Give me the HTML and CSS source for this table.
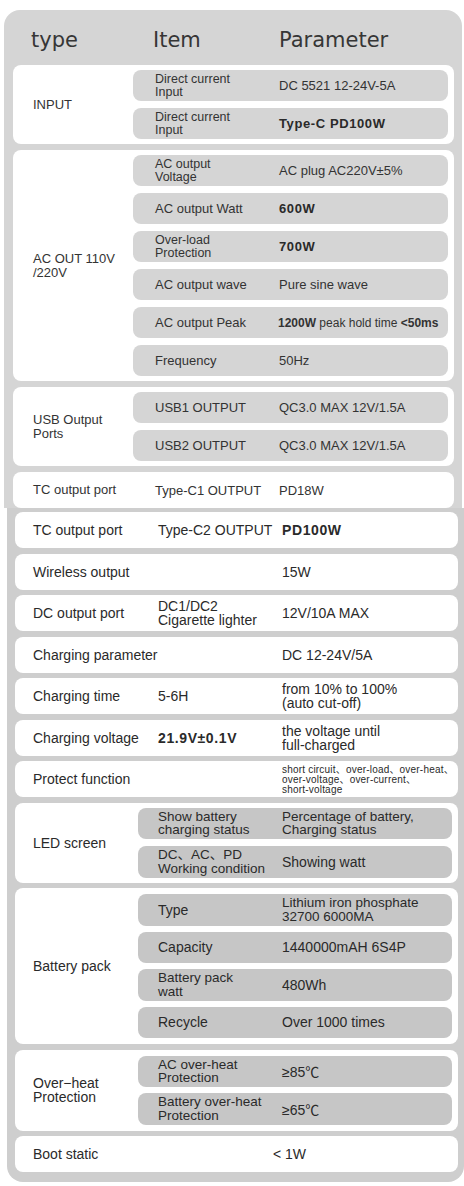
FILE: index.html
```html
<!DOCTYPE html>
<html lang="en">
<head>
<meta charset="utf-8">
<title>Parameters</title>
<link rel="stylesheet" href="styles.css">
</head>
<body>
<div class="sheet sheet-top">
  <div class="head">
    <div class="h-type">type</div>
    <div class="h-item">Item</div>
    <div class="h-param">Parameter</div>
  </div>

  <div class="card">
    <div class="type">INPUT</div>
    <div class="rows">
      <div class="row pill"><div class="item two">Direct current<br>Input</div><div class="param">DC 5521 12-24V-5A</div></div>
      <div class="row pill"><div class="item two">Direct current<br>Input</div><div class="param strong">Type-C PD100W</div></div>
    </div>
  </div>

  <div class="card">
    <div class="type two-lbl">AC OUT 110V<br>/220V</div>
    <div class="rows">
      <div class="row pill"><div class="item two">AC output<br>Voltage</div><div class="param">AC plug AC220V±5%</div></div>
      <div class="row pill"><div class="item">AC output Watt</div><div class="param strong">600W</div></div>
      <div class="row pill"><div class="item two">Over-load<br>Protection</div><div class="param strong">700W</div></div>
      <div class="row pill"><div class="item">AC output wave</div><div class="param">Pure sine wave</div></div>
      <div class="row pill"><div class="item">AC output Peak</div><div class="param small"><b>1200W</b> peak hold time <b>&lt;50ms</b></div></div>
      <div class="row pill"><div class="item">Frequency</div><div class="param">50Hz</div></div>
    </div>
  </div>

  <div class="card">
    <div class="type two-lbl">USB Output<br>Ports</div>
    <div class="rows">
      <div class="row pill"><div class="item">USB1 OUTPUT</div><div class="param">QC3.0 MAX 12V/1.5A</div></div>
      <div class="row pill"><div class="item">USB2 OUTPUT</div><div class="param">QC3.0 MAX 12V/1.5A</div></div>
    </div>
  </div>

  <div class="card single">
    <div class="type">TC output port</div>
    <div class="row"><div class="item">Type-C1 OUTPUT</div><div class="param">PD18W</div></div>
  </div>
</div>

<div class="sheet sheet-bottom">
  <div class="card single">
    <div class="type">TC output port</div>
    <div class="row"><div class="item">Type-C2 OUTPUT</div><div class="param strong">PD100W</div></div>
  </div>

  <div class="card single">
    <div class="type">Wireless output</div>
    <div class="row"><div class="item"></div><div class="param">15W</div></div>
  </div>

  <div class="card single">
    <div class="type">DC output port</div>
    <div class="row"><div class="item two">DC1/DC2<br>Cigarette lighter</div><div class="param">12V/10A MAX</div></div>
  </div>

  <div class="card single">
    <div class="type">Charging parameter</div>
    <div class="row"><div class="item"></div><div class="param">DC 12-24V/5A</div></div>
  </div>

  <div class="card single">
    <div class="type">Charging time</div>
    <div class="row"><div class="item">5-6H</div><div class="param two">from 10% to 100%<br>(auto cut-off)</div></div>
  </div>

  <div class="card single">
    <div class="type">Charging voltage</div>
    <div class="row"><div class="item strong">21.9V±0.1V</div><div class="param two">the voltage until<br>full-charged</div></div>
  </div>

  <div class="card single">
    <div class="type">Protect function</div>
    <div class="row"><div class="item"></div><div class="param tiny">short circuit、over-load、over-heat、<br>over-voltage、over-current、<br>short-voltage</div></div>
  </div>

  <div class="card">
    <div class="type">LED screen</div>
    <div class="rows">
      <div class="row pill"><div class="item two">Show battery<br>charging status</div><div class="param two">Percentage of battery,<br>Charging status</div></div>
      <div class="row pill"><div class="item two">DC、AC、PD<br>Working condition</div><div class="param">Showing watt</div></div>
    </div>
  </div>

  <div class="card battery">
    <div class="type">Battery pack</div>
    <div class="rows">
      <div class="row pill"><div class="item">Type</div><div class="param two">Lithium iron phosphate<br>32700 6000MA</div></div>
      <div class="row pill"><div class="item">Capacity</div><div class="param">1440000mAH 6S4P</div></div>
      <div class="row pill"><div class="item two">Battery pack<br>watt</div><div class="param">480Wh</div></div>
      <div class="row pill"><div class="item">Recycle</div><div class="param">Over 1000 times</div></div>
    </div>
  </div>

  <div class="card heat">
    <div class="type two-lbl">Over−heat<br>Protection</div>
    <div class="rows">
      <div class="row pill"><div class="item two">AC over-heat<br>Protection</div><div class="param">≥85℃</div></div>
      <div class="row pill"><div class="item two">Battery over-heat<br>Protection</div><div class="param">≥65℃</div></div>
    </div>
  </div>

  <div class="card single">
    <div class="type">Boot static</div>
    <div class="row"><div class="item"></div><div class="param shift">&lt; 1W</div></div>
  </div>
</div>
</body>
</html>
```

FILE: styles.css
```css
* { box-sizing: border-box; }

html, body {
  margin: 0;
  padding: 0;
  background: #ffffff;
}

body {
  width: 464px;
  font-family: "Liberation Sans", Arial, "Noto Sans CJK SC", sans-serif;
  color: #333333;
  padding-top: 10px;
  padding-bottom: 6px;
}

.sheet {
  display: flex;
  flex-direction: column;
}

.sheet-top {
  margin-left: 4px;
  width: 458px;
  background: #d5d5d5;
  border-radius: 16px 16px 0 0;
  padding: 0 8px 0 9px;
  gap: 6px;
  --tc: 120px;
  --rp: 22px;
  --tp: 20px;
  font-size: 13px;
}

.sheet-bottom {
  margin-left: 7px;
  width: 457px;
  background: #cecece;
  border-radius: 0 0 16px 16px;
  padding: 4px 6px 10px 8px;
  gap: 5.5px;
  --tc: 123px;
  --rp: 20px;
  --tp: 18px;
  font-size: 14px;
  color: #2a2a2a;
}

.head {
  display: grid;
  grid-template-columns: 122px 126px 1fr;
  height: 55px;
  margin-bottom: -6px;
  padding: 6px 0 0 18px;
  font-family: "DejaVu Sans", "Liberation Sans", sans-serif;
  font-size: 21px;
  line-height: 49px;
  color: #363636;
}

.card {
  display: grid;
  grid-template-columns: var(--tc) 1fr;
  align-items: center;
  background: #ffffff;
  border-radius: 8px;
  padding: 5px 6px 5px 0;
}

.card.single {
  padding: 0 6px 0 0;
  min-height: 36px;
}

.card.battery { padding: 6px 6px 6px 0; }
.card.heat { padding: 6px 6px 6px 0; }

.type {
  padding-left: var(--tp);
  white-space: nowrap;
  line-height: 14px;
}

.rows {
  display: flex;
  flex-direction: column;
  gap: 7px;
}

.battery .rows { gap: 6px; }
.heat .rows { gap: 6px; }

.row {
  display: grid;
  grid-template-columns: 124px 1fr;
  align-items: center;
  padding-left: var(--rp);
  white-space: nowrap;
}

.pill {
  height: 31px;
  background: #d5d5d5;
  border-radius: 8px;
}

.sheet-bottom .pill {
  height: 31.5px;
  background: #c6c6c6;
}

.two { line-height: 12.5px; }
.sheet-top .item.two { font-size: 12.5px; }
.sheet-bottom .two { line-height: 14px; }
.sheet-bottom .pill .two {
  font-size: 13.5px;
  line-height: 13.5px;
}

.strong {
  font-weight: bold;
  letter-spacing: 0.6px;
  color: #2a2a2a;
}

.small {
  font-size: 12px;
  margin-left: -1px;
}

.small b { font-weight: bold; }

.tiny {
  font-size: 10px;
  line-height: 10px;
  letter-spacing: 0.2px;
  margin-top: 1px;
}

.shift { margin-left: -9px; }
```
